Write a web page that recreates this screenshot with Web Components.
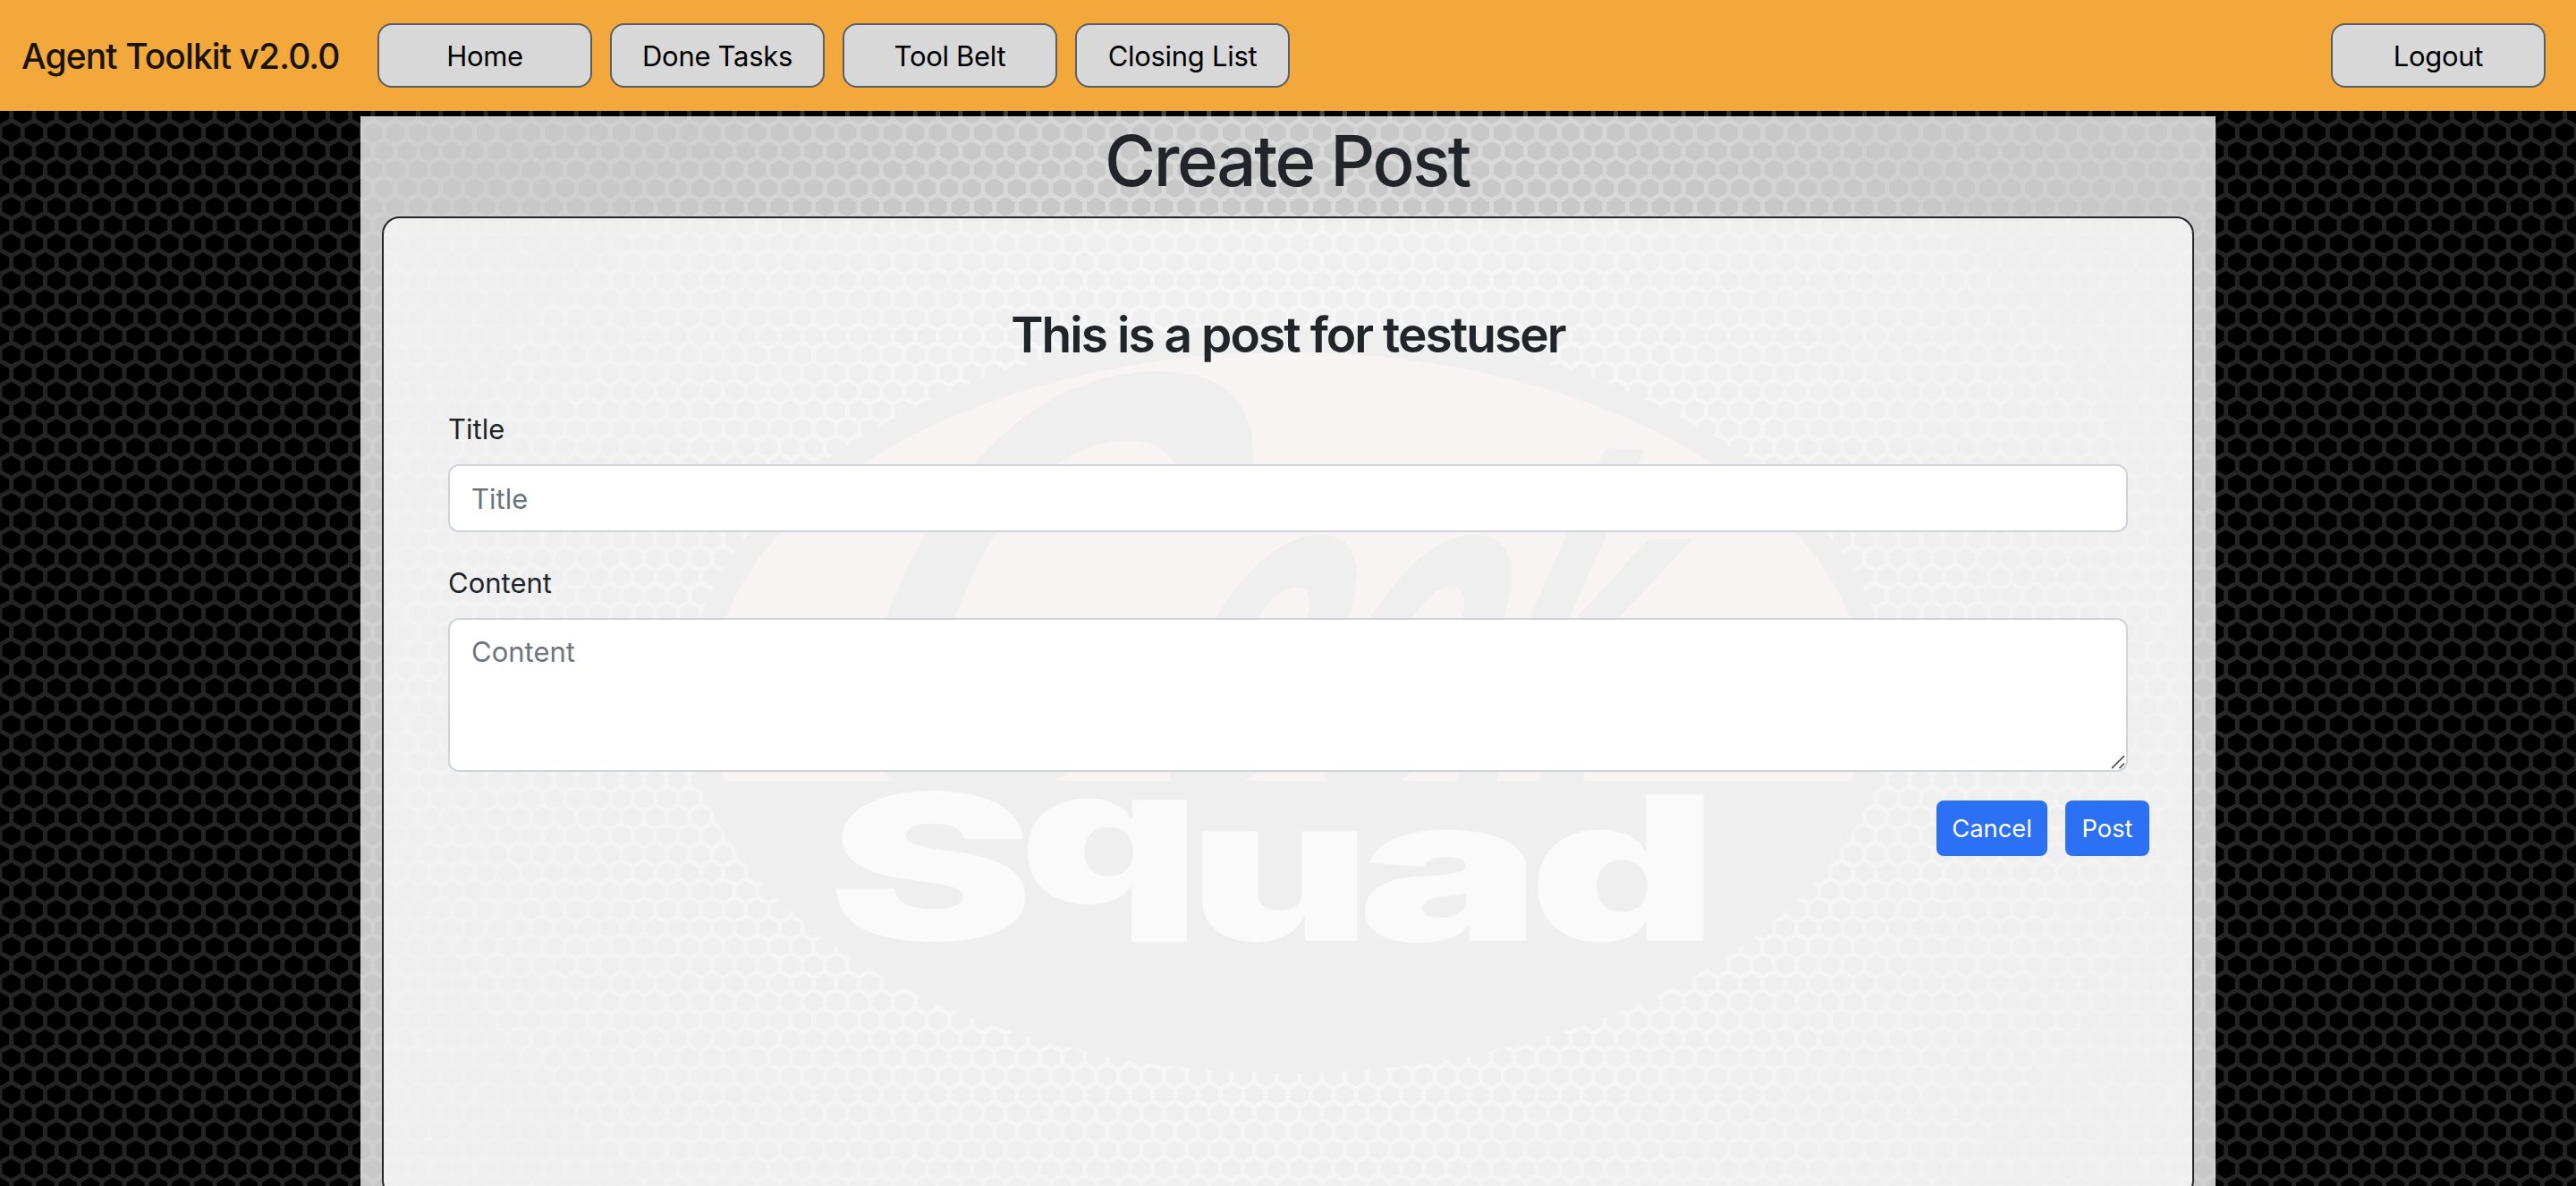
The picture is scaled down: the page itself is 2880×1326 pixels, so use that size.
<!DOCTYPE html>
<html lang="en">
<head>
<meta charset="utf-8">
<title>Agent Toolkit</title>
<style>
html,body{margin:0;height:100%}
body{background:#000;font-family:Inter,"Liberation Sans",sans-serif;color:#212529;overflow:hidden}
</style>
</head>
<body>
<toolkit-app></toolkit-app>
<script>
const define=(name,html,setup)=>customElements.define(name,class extends HTMLElement{
  constructor(){super();this.attachShadow({mode:'open'}).innerHTML=html;}
  connectedCallback(){if(setup)setup(this,this.shadowRoot);}
});

/* Honeycomb wallpaper with the oval squad emblem */
define('honeycomb-backdrop',`
<style>
:host{display:block;width:2880px;height:1326px}
svg{display:block}
</style>
<svg width="2880" height="1326" viewBox="0 0 2880 1326" aria-hidden="true">
  <defs>
    <radialGradient id="glow" gradientUnits="userSpaceOnUse" cx="0" cy="0" r="1" gradientTransform="translate(1440 783) scale(1150 900)">
      <stop offset="0" stop-color="#808080"/><stop offset=".5" stop-color="#6c6c6c"/>
      <stop offset=".75" stop-color="#424242"/><stop offset=".9" stop-color="#282828"/><stop offset="1" stop-color="#242424"/>
    </radialGradient>
    <clipPath id="cap"><rect x="780" y="380" width="1320" height="493"/></clipPath>
  </defs>
  <rect width="2880" height="1326" fill="#000"/>
  <path id="mesh" fill="none" stroke="url(#glow)" stroke-width="5"/>
  <ellipse cx="1440" cy="783" rx="674" ry="417" fill="#000"/>
  <ellipse cx="1440" cy="782" rx="647" ry="388" fill="#965850" clip-path="url(#cap)"/>
  <g fill="#000" clip-path="url(#cap)" font-family="Liberation Sans" font-weight="700">
    <text transform="translate(878 890) skewX(-24.2) scale(.78 1)" font-size="680">C</text>
    <text transform="translate(1262 880) skewX(-24.2) scale(.55 1)" font-size="515" stroke="#000" stroke-width="10">ook</text>
  </g>
  <text transform="scale(1.4 1)" fill="#aaa" font-family="Inter" font-weight="900" font-size="225"><tspan x="661" y="1051" font-size="226" textLength="165" lengthAdjust="spacingAndGlyphs">S</tspan><tspan x="814" y="1010" font-size="212" textLength="145" lengthAdjust="spacingAndGlyphs">q</tspan><tspan x="949" y="1052">u</tspan><tspan x="1084" y="1052" textLength="147" lengthAdjust="spacingAndGlyphs">a</tspan><tspan x="1221" y="1052" textLength="151" lengthAdjust="spacingAndGlyphs">d</tspan></text>
</svg>`,(el,root)=>{
  const px=25.265,py=20.685,r=py/1.5,h=px/2;let d='';
  for(let j=-8;j<58;j++)for(let i=-1;i<116;i++){
    const x=12.67+i*px+(j&1?h:0),y=148.3+j*py;
    if(((x-1440)/674)**2+((y-783)/416)**2<1)continue;
    d+=`M${x.toFixed(1)} ${(y-r).toFixed(1)}l${h} ${r/2}v${r}l${-h} ${r/2}l${-h} ${-r/2}v${-r}z`;
  }
  root.getElementById('mesh').setAttribute('d',d);
});

define('nav-button',`
<style>
:host{display:block}
button{box-sizing:border-box;display:flex;align-items:center;justify-content:center;width:240px;height:72px;margin:0;padding:2px 0 0;border:2px solid #5b5d5f;border-radius:16px;background:#d8d8d8;color:#000;font:400 31px/44px Inter,sans-serif;letter-spacing:-.3px}
</style>
<button><slot></slot></button>`);

define('top-bar',`
<style>
:host{display:flex;align-items:center;box-sizing:border-box;height:124px;padding:0 34px 0 24px;background:#f2a83b}
.brand{width:398px;font-size:39px;font-weight:500;color:#1a1406;white-space:nowrap;letter-spacing:-.9px}
nav{display:flex;gap:20px;flex:1}
</style>
<span class="brand">Agent Toolkit v2.0.0</span>
<nav><nav-button>Home</nav-button><nav-button>Done Tasks</nav-button><nav-button>Tool Belt</nav-button><nav-button>Closing List</nav-button></nav>
<nav-button>Logout</nav-button>`);

define('form-field',`
<style>
:host{display:flex;flex-direction:column;gap:16px}
label{font-size:31px;line-height:46px;padding-top:2px}
.box{position:relative}
.control{box-sizing:border-box;display:block;width:100%;height:76px;margin:0;padding:12px 24px;border:2px solid #ced4da;border-radius:12px;background:#fff;color:#212529;font:400 31px/48px Inter,sans-serif;resize:none;outline:0}
textarea.control{height:172px}
.control::placeholder{color:#6c757d;opacity:1}
.grip{position:absolute;right:3px;bottom:3px}
</style>
<label></label><div class="box"></div>`,(el,root)=>{
  const text=el.getAttribute('label'),multi=el.hasAttribute('multiline');
  root.querySelector('label').textContent=text;
  const c=document.createElement(multi?'textarea':'input');
  c.className='control';c.placeholder=text;
  const box=root.querySelector('.box');box.append(c);
  if(multi)box.insertAdjacentHTML('beforeend','<svg class="grip" width="16" height="16" viewBox="0 0 16 16" fill="none" stroke="#444" stroke-width="1.7"><path d="M1 15 15 1M9.5 15 15 9.5"/></svg>');
});

define('action-button',`
<style>
:host{display:block}
button{display:block;height:62px;margin:0;padding:0;border:0;border-radius:8px;background:#2c70f4;color:#fff;font:400 27.3px/63px Inter,sans-serif;width:var(--w)}
</style>
<button><slot></slot></button>`);

define('post-card',`
<style>
:host{box-sizing:border-box;display:block;height:1098px;padding:96px 72px 0;border:2px solid #212529;border-radius:20px;background:rgba(255,255,255,.7)}
h2{margin:0 0 47px;text-align:center;font-size:55px;line-height:68px;font-weight:580;letter-spacing:-1.95px}
.fields{display:flex;flex-direction:column;gap:32px}
.actions{display:flex;justify-content:flex-end;gap:20px;margin:32px -24px 0 0}
</style>
<h2>This is a post for testuser</h2>
<div class="fields"><form-field label="Title"></form-field><form-field label="Content" multiline></form-field></div>
<div class="actions"><action-button style="--w:124px">Cancel</action-button><action-button style="--w:94px">Post</action-button></div>`);

define('toolkit-app',`
<style>
:host{display:grid;width:2880px;height:1326px;overflow:hidden}
honeycomb-backdrop,.page{grid-area:1/1}
.page{position:relative;display:flex;flex-direction:column;min-height:0;height:1326px}
main{box-sizing:border-box;width:2074px;margin:6px 0 0 403px;padding:2px 24px 0;flex:1;min-height:0;background:rgba(255,255,255,.784)}
h1{margin:0 0 14px;padding-right:2px;text-align:center;font-size:78px;line-height:96px;font-weight:550;letter-spacing:-2.4px}
</style>
<honeycomb-backdrop></honeycomb-backdrop>
<div class="page"><top-bar></top-bar><main><h1>Create Post</h1><post-card></post-card></main></div>`);
</script>
</body>
</html>
